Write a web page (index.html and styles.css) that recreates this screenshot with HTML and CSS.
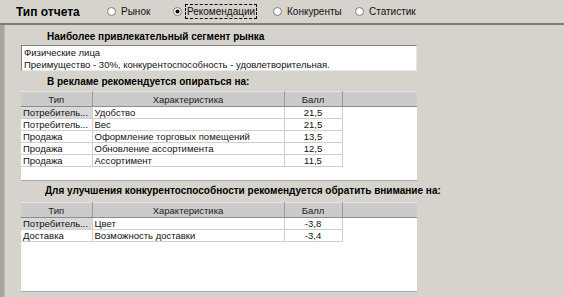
FILE: index.html
```html
<!DOCTYPE html>
<html lang="ru">
<head>
<meta charset="utf-8">
<link rel="stylesheet" href="styles.css">
</head>
<body>
<div class="topbar">
  <div class="title">Тип отчета</div>
  <div class="radios">
    <label class="radio r1"><svg width="9" height="9" viewBox="0 0 9 9"><circle cx="4.5" cy="4.5" r="4" fill="#fff" stroke="#7a7a7a"/></svg><span>Рынок</span></label>
    <label class="radio r2"><svg width="9" height="9" viewBox="0 0 9 9"><circle cx="4.5" cy="4.5" r="4" fill="#fff" stroke="#7a7a7a"/><circle cx="4.5" cy="4.5" r="2" fill="#000"/></svg><span class="focus">Рекомендации</span></label>
    <label class="radio r3"><svg width="9" height="9" viewBox="0 0 9 9"><circle cx="4.5" cy="4.5" r="4" fill="#fff" stroke="#7a7a7a"/></svg><span>Конкуренты</span></label>
    <label class="radio r4"><svg width="9" height="9" viewBox="0 0 9 9"><circle cx="4.5" cy="4.5" r="4" fill="#fff" stroke="#7a7a7a"/></svg><span>Статистик</span></label>
  </div>
</div>
<div class="main">
  <div class="strip"></div>
  <div class="content">
    <div class="heading h1">Наиболее привлекательный сегмент рынка</div>
    <div class="textbox">
      <div>Физические лица</div>
      <div>Преимущество - 30%, конкурентоспособность - удовлетворительная.</div>
    </div>
    <div class="heading h2">В рекламе рекомендуется опираться на:</div>
    <div class="grid">
      <table>
        <thead>
          <tr><th class="c1">Тип</th><th class="c2">Характеристика</th><th class="c3">Балл</th><th class="c4"></th></tr>
        </thead>
        <tbody>
          <tr><td class="c1 sel">Потребитель...</td><td class="c2">Удобство</td><td class="c3">21,5</td><td class="c4"></td></tr>
          <tr><td class="c1">Потребитель...</td><td class="c2">Вес</td><td class="c3">21,5</td><td class="c4"></td></tr>
          <tr><td class="c1">Продажа</td><td class="c2">Оформление торговых помещений</td><td class="c3">13,5</td><td class="c4"></td></tr>
          <tr><td class="c1">Продажа</td><td class="c2">Обновление ассортимента</td><td class="c3">12,5</td><td class="c4"></td></tr>
          <tr><td class="c1">Продажа</td><td class="c2">Ассортимент</td><td class="c3">11,5</td><td class="c4"></td></tr>
        </tbody>
      </table>
    </div>
    <div class="heading h3">Для улучшения конкурентоспособности рекомендуется обратить внимание на:</div>
    <div class="grid">
      <table>
        <thead>
          <tr><th class="c1">Тип</th><th class="c2">Характеристика</th><th class="c3">Балл</th><th class="c4"></th></tr>
        </thead>
        <tbody>
          <tr><td class="c1 sel">Потребитель...</td><td class="c2">Цвет</td><td class="c3">-3,8</td><td class="c4"></td></tr>
          <tr><td class="c1">Доставка</td><td class="c2">Возможность доставки</td><td class="c3">-3,4</td><td class="c4"></td></tr>
        </tbody>
      </table>
    </div>
  </div>
</div>
</body>
</html>
```

FILE: styles.css
```css
html, body {
  margin: 0;
  padding: 0;
}
body {
  width: 564px;
  height: 297px;
  overflow: hidden;
  background: #d6d3cc;
  font-family: "Liberation Sans", Arial, sans-serif;
  font-size: 9.5px;
  color: #111;
}
.topbar {
  display: flex;
  align-items: center;
  padding-left: 16px;
  border-bottom: 2px solid #7e7e7e;
  box-sizing: border-box;
  height: 25px;
  font-size: 10px;
}
.title {
  font-weight: bold;
  font-size: 12px;
  width: 91px;
  color: #000;
}
.radios {
  display: flex;
  align-items: center;
}
.radio {
  display: flex;
  align-items: center;
  gap: 3px;
}
.radio svg {
  display: block;
}
.r1 { width: 66px; }
.r2 { width: 100px; }
.r3 { width: 82px; }
.radio span {
  padding: 1px 1px;
  border: 1px solid transparent;
}
.radio span.focus {
  border: 1px dashed #000;
}
.main {
  display: flex;
  height: 272px;
}
.strip {
  width: 4px;
  background: #a7a5a1;
  border-right: 1px solid #bdbab4;
}
.content {
  margin-left: 16px;
  width: 396px;
  display: flex;
  flex-direction: column;
}
.heading {
  font-weight: bold;
  font-size: 10px;
  color: #000;
  padding-left: 26px;
  white-space: nowrap;
}
.h1 {
  height: 20px;
  line-height: 23px;
}
.h2 {
  height: 20px;
  line-height: 21px;
}
.h3 {
  height: 21px;
  line-height: 19px;
  padding-left: 24px;
}
.textbox {
  background: #fff;
  height: 26px;
  box-sizing: border-box;
  border-top: 1px solid #808080;
  border-left: 1px solid #808080;
  border-right: 1px solid #e8e8e8;
  border-bottom: 1px solid #e8e8e8;
  padding: 1px 2px;
  line-height: 12px;
}
.grid {
  background: #fff;
  height: 90px;
  box-sizing: border-box;
  border-bottom: 1px solid #a9a9a9;
  overflow: hidden;
}
table {
  border-collapse: collapse;
  table-layout: fixed;
  width: 396px;
}
th {
  height: 15px;
  padding: 0;
  background: #cbcbcb;
  font-weight: normal;
  color: #222;
  border-right: 1px solid #9a9a9a;
  border-bottom: 1px solid #8c8c8c;
  border-top: 1px solid #e6e6e6;
  text-align: center;
  box-sizing: border-box;
}
th.c4 { border-right: none; }
td {
  height: 12px;
  padding: 0 2px;
  line-height: 11px;
  border-bottom: 1px solid #cfcfcf;
  border-right: 1px solid #cfcfcf;
  white-space: nowrap;
  overflow: hidden;
  box-sizing: border-box;
}
td.c4 { border: none; }
.c1 { width: 71px; }
.c2 { width: 192px; }
.c3 { width: 58px; text-align: center; }
td.c3 { text-align: center; }
td.sel { background: #d9d9d9; }
```
